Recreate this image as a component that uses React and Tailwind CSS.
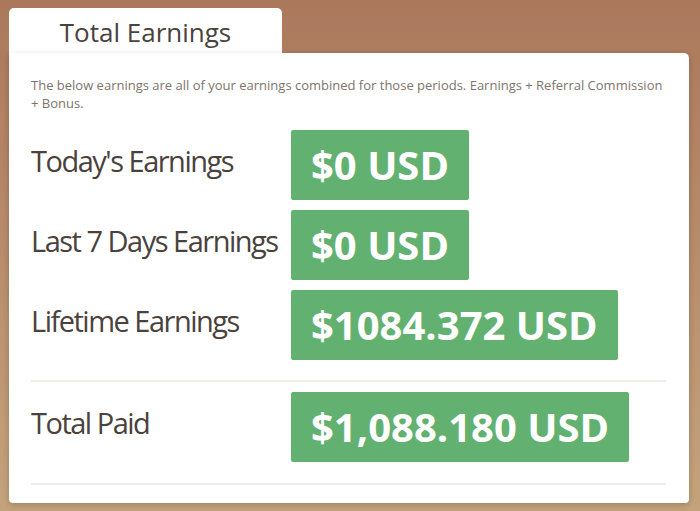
import React from "react";

const rows = [
  { label: "Today's Earnings", value: "$0 USD" },
  { label: "Last 7 Days Earnings", value: "$0 USD" },
  { label: "Lifetime Earnings", value: "$1084.372 USD" },
];

const Row = ({ label, value }) => (
  <div className="flex items-start">
    <div className="w-[260px] pt-[11px] text-[29px] font-normal tracking-[-1.5px] text-[#4a423c] leading-[40px]">
      {label}
    </div>
    <div className="h-[70px] px-[20px] flex items-center bg-[#63b171] rounded-[2px] text-white text-[40px] font-bold leading-none">
      {value}
    </div>
  </div>
);

const App = () => {
  return (
    <div
      className="w-[700px] h-[511px] bg-gradient-to-b from-[#ab785c] to-[#c4a37c] pt-[8px] pl-[9px] overflow-hidden"
      style={{ fontFamily: '"Open Sans", sans-serif' }}
    >
      <div className="w-[273px] h-[45px] bg-white rounded-t-[5px] flex items-center justify-center">
        <span className="text-[26px] text-[#4a423c] pt-[4px]">Total Earnings</span>
      </div>
      <div className="w-[680px] bg-white rounded-tr-[5px] rounded-b-[4px] shadow-[0_2px_6px_rgba(0,0,0,0.2)] px-[22px] pt-[23px] pb-[18px]">
        <p className="text-[13px] leading-[18px] text-[#7d746c]">
          The below earnings are all of your earnings combined for those periods. Earnings + Referral Commission + Bonus.
        </p>
        <div className="flex flex-col gap-[10px] mt-[18px]">
          {rows.map((r) => (
            <Row key={r.label} {...r} />
          ))}
        </div>
        <div className="border-t-2 border-[#f0ece8] mt-[20px] w-[635px]" />
        <div className="mt-[10px]">
          <Row label="Total Paid" value="$1,088.180 USD" />
        </div>
        <div className="border-t-2 border-[#f0ece8] mt-[21px] w-[635px]" />
      </div>
    </div>
  );
};

export default App;
